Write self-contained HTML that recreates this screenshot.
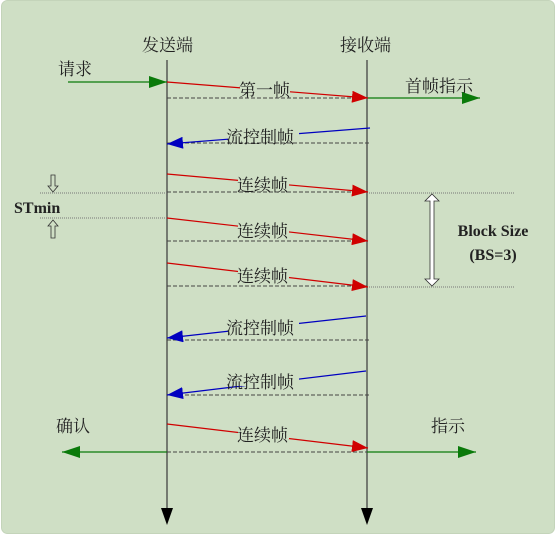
<!DOCTYPE html>
<html><head><meta charset="utf-8"><style>
html,body{margin:0;padding:0;background:#fff;width:556px;height:535px;overflow:hidden}
svg{display:block}
text{font-family:"Liberation Serif","Noto Serif CJK SC",serif;fill:#222}
</style></head><body>
<svg width="556" height="535" viewBox="0 0 556 535" xmlns="http://www.w3.org/2000/svg">
<defs>
<marker id="r" markerWidth="16" markerHeight="12" refX="16" refY="6" orient="auto" markerUnits="userSpaceOnUse"><path d="M0,0 L16,6 L0,12z" fill="#d00000"/></marker>
<marker id="b" markerWidth="16" markerHeight="12" refX="16" refY="6" orient="auto" markerUnits="userSpaceOnUse"><path d="M0,0 L16,6 L0,12z" fill="#0000c0"/></marker>
<marker id="g" markerWidth="18" markerHeight="12" refX="18" refY="6" orient="auto" markerUnits="userSpaceOnUse"><path d="M0,0 L18,6 L0,12z" fill="#0a7a0a"/></marker>
</defs>
<rect x="1.5" y="0.5" width="553" height="533" rx="6" fill="#cfdfc5" stroke="#c4d4ba"/>
<g font-size="17">
<text x="142" y="51">发送端</text>
<text x="340" y="51">接收端</text>
<text x="58" y="75">请求</text>
<text x="405" y="92">首帧指示</text>
<text x="56" y="432">确认</text>
<text x="431" y="432">指示</text>
</g>
<g stroke="#444" stroke-width="1.3">
<line x1="167" y1="60" x2="167" y2="510"/>
<line x1="367" y1="60" x2="367" y2="510"/>
</g>
<path d="M161,508 L173,508 L167,525z" fill="#000"/>
<path d="M361,508 L373,508 L367,525z" fill="#000"/>
<g stroke="#444" stroke-width="1" stroke-dasharray="4,2">
<line x1="167" y1="98" x2="367" y2="98"/>
<line x1="167" y1="143" x2="370" y2="143"/>
<line x1="167" y1="192" x2="367" y2="192"/>
<line x1="167" y1="241" x2="367" y2="241"/>
<line x1="167" y1="286" x2="367" y2="286"/>
<line x1="167" y1="340" x2="370" y2="340"/>
<line x1="167" y1="395" x2="370" y2="395"/>
<line x1="167" y1="452" x2="367" y2="452"/>
</g>
<g stroke="#777" stroke-width="1" stroke-dasharray="1,1">
<line x1="40" y1="193" x2="167" y2="193"/>
<line x1="367" y1="193" x2="515" y2="193"/>
<line x1="40" y1="218" x2="167" y2="218"/>
<line x1="367" y1="287" x2="515" y2="287"/>
</g>
<g stroke-width="1.2" fill="none">
<line x1="68" y1="82" x2="167" y2="82" stroke="#0a7a0a" marker-end="url(#g)"/>
<line x1="367" y1="98" x2="480" y2="98" stroke="#0a7a0a" marker-end="url(#g)"/>
<line x1="167" y1="452" x2="62" y2="452" stroke="#0a7a0a" marker-end="url(#g)"/>
<line x1="367" y1="452" x2="476" y2="452" stroke="#0a7a0a" marker-end="url(#g)"/>
<line x1="167" y1="82" x2="368" y2="98" stroke="#d00000" marker-end="url(#r)"/>
<line x1="167" y1="174" x2="368" y2="192" stroke="#d00000" marker-end="url(#r)"/>
<line x1="167" y1="218" x2="368" y2="241" stroke="#d00000" marker-end="url(#r)"/>
<line x1="167" y1="263" x2="368" y2="287" stroke="#d00000" marker-end="url(#r)"/>
<line x1="167" y1="424" x2="368" y2="448" stroke="#d00000" marker-end="url(#r)"/>
<line x1="370" y1="128" x2="167" y2="144" stroke="#0000c0" marker-end="url(#b)"/>
<line x1="366" y1="316" x2="167" y2="338" stroke="#0000c0" marker-end="url(#b)"/>
<line x1="366" y1="371" x2="167" y2="395" stroke="#0000c0" marker-end="url(#b)"/>
</g>
<g fill="#cfdfc5">
<rect x="240" y="81" width="50" height="13"/>
<rect x="228" y="128" width="71" height="13"/>
<rect x="238" y="177" width="51" height="12"/>
<rect x="238" y="223" width="51" height="12"/>
<rect x="238" y="268" width="51" height="12"/>
<rect x="228" y="319" width="71" height="13"/>
<rect x="228" y="373" width="71" height="13"/>
<rect x="238" y="427" width="51" height="12"/>
</g>
<g font-size="17">
<text x="239" y="96">第一帧</text>
<text x="226" y="143">流控制帧</text>
<text x="237" y="191">连续帧</text>
<text x="237" y="237">连续帧</text>
<text x="237" y="282">连续帧</text>
<text x="226" y="334">流控制帧</text>
<text x="226" y="388">流控制帧</text>
<text x="237" y="441">连续帧</text>
</g>
<path d="M51,175 L55,175 L55,186 L58,186 L53,192 L48,186 L51,186z" fill="none" stroke="#333" stroke-width="0.8"/>
<path d="M51,238 L55,238 L55,226 L58,226 L53,220 L48,226 L51,226z" fill="none" stroke="#333" stroke-width="0.8"/>
<text x="14" y="213" font-size="16" font-weight="bold" fill="#111">STmin</text>
<path d="M430,201 L425,201 L432,194 L439,201 L434,201 L434,279 L439,279 L432,286 L425,279 L430,279z" fill="#fff" stroke="#333" stroke-width="0.8"/>
<text x="493" y="236" font-size="16" font-weight="bold" text-anchor="middle" fill="#111">Block Size</text>
<text x="493" y="260" font-size="16" font-weight="bold" text-anchor="middle" fill="#111">(BS=3)</text>
</svg>
</body></html>
